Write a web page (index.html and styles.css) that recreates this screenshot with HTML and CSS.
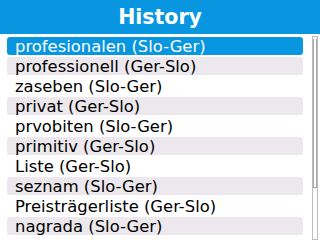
FILE: index.html
```html
<!DOCTYPE html>
<html>
<head>
<meta charset="utf-8">
<link rel="stylesheet" href="styles.css">
</head>
<body>
<div class="header">History</div>
<div class="content">
  <div class="list">
    <div class="row selected">profesionalen (Slo-Ger)</div>
    <div class="row alt">professionell (Ger-Slo)</div>
    <div class="row">zaseben (Slo-Ger)</div>
    <div class="row alt">privat (Ger-Slo)</div>
    <div class="row">prvobiten (Slo-Ger)</div>
    <div class="row alt">primitiv (Ger-Slo)</div>
    <div class="row">Liste (Ger-Slo)</div>
    <div class="row alt">seznam (Slo-Ger)</div>
    <div class="row">Preisträgerliste (Ger-Slo)</div>
    <div class="row alt">nagrada (Slo-Ger)</div>
  </div>
  <div class="scrollbar"><div class="thumb"></div></div>
</div>
</body>
</html>
```
FILE: styles.css
```css
html, body {
  margin: 0;
  padding: 0;
  background: #ffffff;
  width: 320px;
  height: 240px;
  overflow: hidden;
  font-family: "DejaVu Sans", sans-serif;
}
.header {
  height: 34px;
  background: #0896e0;
  color: #ffffff;
  font-weight: bold;
  font-size: 20.5px;
  line-height: 34px;
  text-align: center;
}
.content {
  display: flex;
  padding: 3px 2px 0 7px;
  gap: 9px;
}
.list {
  width: 296px;
  display: flex;
  flex-direction: column;
  gap: 2px;
}
.row {
  height: 17px;
  padding-top: 1px;
  line-height: 18px;
  font-size: 16.4px;
  padding-left: 8px;
  border-radius: 3px;
  color: #000000;
  white-space: nowrap;
}
.row.alt {
  background: #ece8ed;
}
.row.selected {
  background: #0896e0;
  color: #ffffff;
}
.scrollbar {
  margin-top: -1px;
  width: 4px;
  height: 200px;
  border: 1px solid #bdbdbd;
  padding: 2px 0 0 0;
  box-sizing: content-box;
}
.thumb {
  margin: 0 auto;
  width: 2px;
  height: 148px;
  border: 1px solid #a6a6a6;
  border-top: none;
  background: #ffffff;
  box-sizing: content-box;
}
```
